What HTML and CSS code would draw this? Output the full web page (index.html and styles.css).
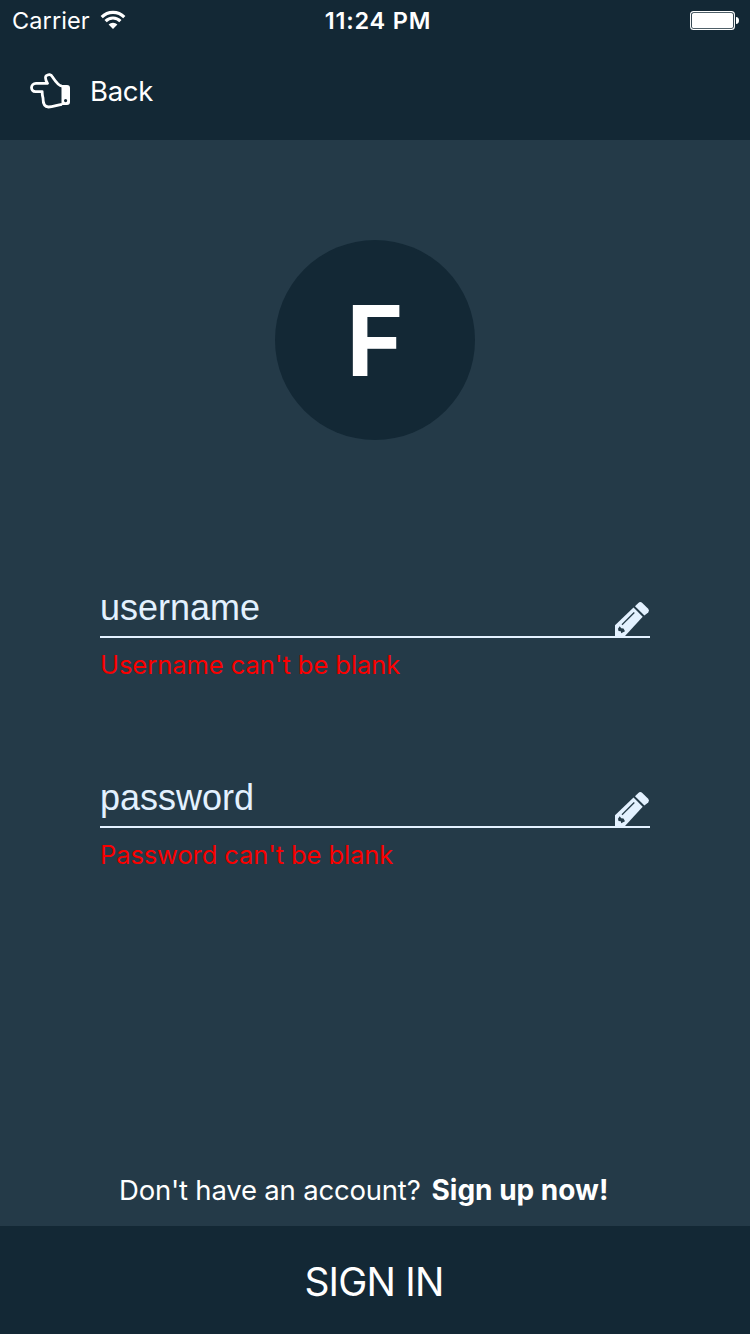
FILE: index.html
```html
<!DOCTYPE html>
<html lang="en">
<head>
<meta charset="utf-8">
<title>Sign in</title>
<link rel="stylesheet" href="styles.css">
</head>
<body>
<div class="screen">
  <header class="header">
    <div class="status">
      <div class="carrier">
        <span class="carrier-name">Carrier</span>
        <svg class="wifi" width="26" height="20" viewBox="0 0 26 20">
          <g fill="none" stroke="#fff" stroke-width="3.1">
            <path d="M1.7 7.1a15.9 15.9 0 0 1 22.6 0"/>
            <path d="M5.6 11.1a10.4 10.4 0 0 1 14.8 0"/>
          </g>
          <path fill="#fff" d="M13 19l-4.400-4.500a6.200 6.200 0 0 1 8.800 0z"/>
        </svg>
      </div>
      <span class="clock">11:24 PM</span>
      <svg class="battery" width="50" height="20" viewBox="0 0 50 20">
        <rect x=".6" y="1.6" width="43.8" height="17.8" rx="3" fill="none" stroke="#fff" stroke-width="1.1"/>
        <rect x="2" y="3" width="41" height="15" rx="1.6" fill="#fff"/>
        <path fill="#fff" d="M46 7c2 0 3 1.500 3 3.500s-1 3.500-3 3.500z"/>
      </svg>
    </div>
    <nav class="nav">
      <svg class="hand" width="40" height="36" viewBox="0 0 40 36">
        <path fill="none" stroke="#fff" stroke-width="2.800" stroke-linejoin="round" d="M32 13.200C28.500 13 25.500 8.500 22.500 4C21.200 1.100 18.400.9 16.200 2.800C14.700 4.300 15.600 7 17.500 10.400H6C.3 10.400 0 18.400 5.500 18.700H12.200C12 21 12.400 22.500 13 25C13 30.500 14.500 34 18.500 34C23 34 26.500 32.200 32 31.300"/>
        <path fill="#fff" fill-rule="evenodd" d="M31.500 12H37a3 3 0 0 1 3 3v14a3 3 0 0 1-3 3h-5.500zM35.600 26a1.600 1.600 0 1 0 0 3.200a1.600 1.600 0 1 0 0-3.200z"/>
      </svg>
      <span class="back">Back</span>
    </nav>
  </header>
  <main class="main">
    <div class="logo"><span class="logo-letter">F</span></div>
    <form class="form">
      <div class="field">
        <div class="input">
          <span class="value">username</span>
          <svg class="pencil" width="36" height="35" viewBox="0 0 36 35">
            <path fill="#e3f1ff" d="M1 35V24.200L19.500 6.600L28.700 15.800L11 35z"/>
            <path fill="#e3f1ff" d="M21 5.200L24.300 2Q26.300.2 28.300 2L34.200 7.800Q35.800 9.600 34.200 11.400L30.400 14.600z"/>
            <path d="M8 23.800L20.300 11.500" stroke="#243a47" stroke-width="1.300"/>
            <path fill="#243a47" d="M5.700 25.200L4 27.800L4.500 30L6.800 30.300L7.200 32.300L11 30.200L9.500 27.600L7.200 27.200z"/>
          </svg>
        </div>
        <span class="error error-user">Username can't be blank</span>
      </div>
      <div class="field">
        <div class="input">
          <span class="value">password</span>
          <svg class="pencil" width="36" height="35" viewBox="0 0 36 35">
            <path fill="#e3f1ff" d="M1 35V24.200L19.500 6.600L28.700 15.800L11 35z"/>
            <path fill="#e3f1ff" d="M21 5.200L24.300 2Q26.300.2 28.300 2L34.200 7.800Q35.800 9.600 34.200 11.400L30.400 14.600z"/>
            <path d="M8 23.800L20.300 11.500" stroke="#243a47" stroke-width="1.300"/>
            <path fill="#243a47" d="M5.700 25.200L4 27.800L4.500 30L6.800 30.300L7.200 32.300L11 30.200L9.500 27.600L7.200 27.200z"/>
          </svg>
        </div>
        <span class="error error-pass">Password can't be blank</span>
      </div>
    </form>
    <p class="signup"><span class="question">Don't have an account?</span><span class="link">Sign up now!</span></p>
  </main>
  <footer class="footer"><span class="signin">SIGN IN</span></footer>
</div>
</body>
</html>
```
FILE: styles.css
```css
body {
  margin: 0;
  font-family: Inter, "Liberation Sans", sans-serif;
  color: #fff;
}
.screen {
  display: flex;
  flex-direction: column;
  height: 1334px;
  background: #243a48;
  white-space: nowrap;
}
.header {
  height: 140px;
  background: #132835;
}
.status {
  display: grid;
  grid-template-columns: 1fr auto 1fr;
  align-items: center;
  height: 40px;
  padding: 0 10px 0 12px;
}
.carrier {
  display: flex;
  align-items: center;
  gap: 10px;
}
.carrier-name {
  font-size: 23.500px;
  letter-spacing: 0.1px;
  line-height: 38px;
  padding-top: 2px;
}
.clock {
  font-size: 23.500px;
  font-weight: 600;
  letter-spacing: 0.8px;
  line-height: 38px;
  padding: 2px 0 0 4px;
}
.battery {
  justify-self: end;
}
.nav {
  display: flex;
  align-items: center;
  gap: 20px;
  height: 102px;
  padding-left: 30px;
}
.back {
  font-size: 27.500px;
  letter-spacing: -0.3px;
  line-height: 40px;
}
.main {
  flex: 1;
  display: flex;
  flex-direction: column;
  align-items: center;
}
.logo {
  display: flex;
  align-items: center;
  justify-content: center;
  width: 200px;
  height: 200px;
  margin-top: 100px;
  border-radius: 50%;
  background: #132835;
}
.logo-letter {
  padding-top: 2px;
  font-size: 97px;
  font-weight: 700;
  line-height: 120px;
}
.form {
  width: 550px;
  margin-top: 138px;
}
.field {
  height: 190px;
}
.input {
  display: flex;
  align-items: flex-end;
  justify-content: space-between;
  height: 58px;
  border-bottom: 2px solid #e3f1ff;
}
.value {
  font-family: "Liberation Sans", Arial, sans-serif;
  font-size: 36px;
  line-height: 56px;
  color: #e3f1ff;
}
.error {
  display: block;
  padding-top: 9px;
  font-size: 25.500px;
  letter-spacing: -0.04px;
  line-height: 36px;
  color: #fa0000;
}
.error-pass {
  letter-spacing: -0.1px;
}
.signup {
  display: flex;
  gap: 11px;
  width: 512px;
  margin: auto 0 16px;
  font-size: 28px;
  line-height: 40px;
}
.question {
  font-size: 27.500px;
  letter-spacing: -0.2px;
}
.link {
  font-weight: 700;
}
.footer {
  display: flex;
  align-items: center;
  justify-content: center;
  height: 108px;
  background: #132835;
}
.signin {
  padding: 3px 2px 0 0;
  font-size: 39px;
  letter-spacing: -0.8px;
  line-height: 50px;
}
```
